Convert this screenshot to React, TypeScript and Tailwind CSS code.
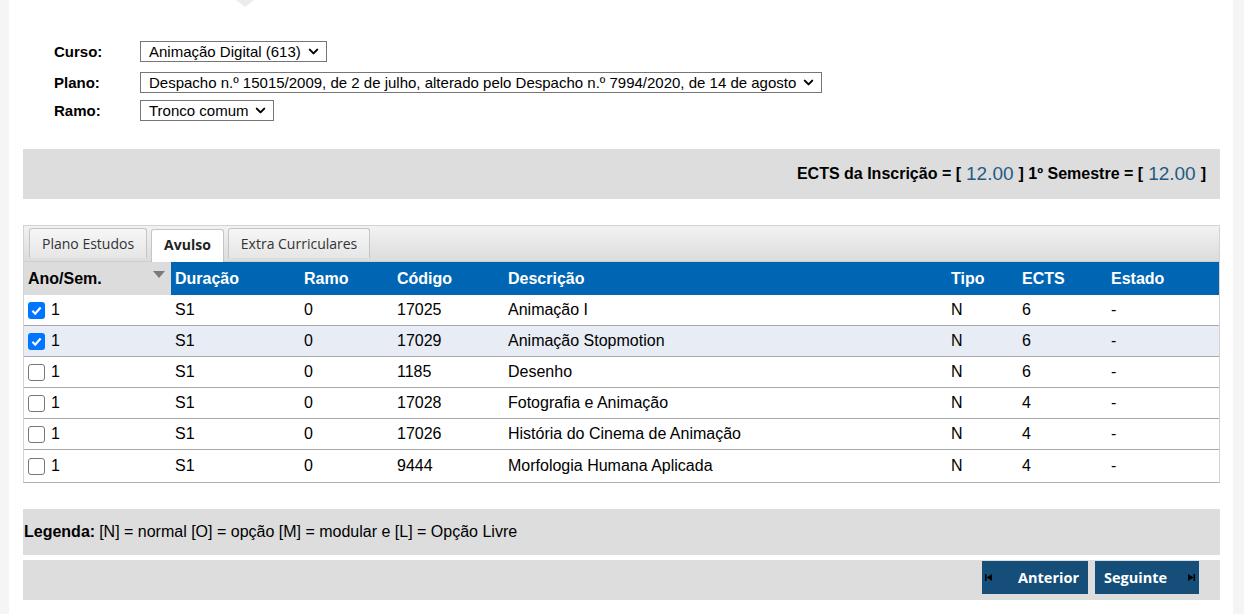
import { ChevronDown } from "lucide-react";

type Row = { checked: boolean; cod: string; desc: string; ects: string };

const rows: Row[] = [
  { checked: true, cod: "17025", desc: "Animação I", ects: "6" },
  { checked: true, cod: "17029", desc: "Animação Stopmotion", ects: "6" },
  { checked: false, cod: "1185", desc: "Desenho", ects: "6" },
  { checked: false, cod: "17028", desc: "Fotografia e Animação", ects: "4" },
  { checked: false, cod: "17026", desc: "História do Cinema de Animação", ects: "4" },
  { checked: false, cod: "9444", desc: "Morfologia Humana Aplicada", ects: "4" },
];

const cols = "grid grid-cols-[147px_129px_93px_111px_443px_71px_89px_112px]";

function FakeSelect({ text }: { text: string }) {
  return (
    <div className="flex items-center h-[21px] border border-[#767676] pl-[8px] pr-[5px] gap-[5px] text-[15px] text-black">
      <span className="leading-none">{text}</span>
      <ChevronDown size={15} strokeWidth={3.2} />
    </div>
  );
}

function Check({ on }: { on: boolean }) {
  return on ? (
    <span className="w-[17px] h-[17px] rounded-[3px] bg-[#0075ff] flex items-center justify-center">
      <svg width="13" height="13" viewBox="0 0 12 12">
        <path d="M2.2 6.3l2.6 2.6 5-5.6" fill="none" stroke="white" strokeWidth="2" />
      </svg>
    </span>
  ) : (
    <span className="w-[17px] h-[17px] rounded-[3px] border border-[#767676] bg-white" />
  );
}

export default function App() {
  return (
    <div className="bg-[#f5f5f5] pl-[9px] pr-[11px] min-h-[614px]" style={{ fontFamily: '"Liberation Sans", Arial, sans-serif' }}>
      <div className="bg-white min-h-[614px] relative px-[14px] pr-[13px]">
        <svg className="absolute left-[227px] top-0" width="18" height="7" viewBox="0 0 18 7">
          <path d="M0 0h18L9 7z" fill="#ececec" />
        </svg>

        <div className="pt-[41px] pl-[31px]">
          <div className="flex items-center h-[21px]">
            <span className="w-[86px] font-bold text-[15px] leading-none">Curso:</span>
            <FakeSelect text="Animação Digital (613)" />
          </div>
          <div className="flex items-center h-[21px] mt-[10px]">
            <span className="w-[86px] font-bold text-[15px] leading-none">Plano:</span>
            <FakeSelect text="Despacho n.º 15015/2009, de 2 de julho, alterado pelo Despacho n.º 7994/2020, de 14 de agosto" />
          </div>
          <div className="flex items-center h-[21px] mt-[7px]">
            <span className="w-[86px] font-bold text-[15px] leading-none">Ramo:</span>
            <FakeSelect text="Tronco comum" />
          </div>
        </div>

        <div className="mt-[28px] h-[50px] bg-[#dddddd] flex items-center justify-end pr-[14px] font-bold text-[16px] text-black gap-[5px]">
          <span>ECTS da Inscrição = [</span>
          <span className="font-normal text-[19px] text-[#1f5b86]">12.00</span>
          <span>] 1º Semestre = [</span>
          <span className="font-normal text-[19px] text-[#1f5b86]">12.00</span>
          <span>]</span>
        </div>

        <div className="mt-[26px] border border-[#d3d3d3] border-b-[#b0b0b0]">
          <div className="h-[36px] bg-gradient-to-b from-[#f2f2f2] to-[#dcdcdc] flex items-end pl-[5px] gap-[4px] border-b border-[#cfcfcf]" style={{ fontFamily: '"Open Sans", sans-serif' }}>
            <div className="h-[30px] px-[12px] flex items-center text-[14px] text-[#333] bg-gradient-to-b from-[#f6f6f6] to-[#e6e6e6] border border-[#c5c5c5] border-b-0 rounded-t-[3px] mb-[3px]">
              Plano Estudos
            </div>
            <div className="h-[33px] px-[12px] pb-[3px] flex items-center text-[14px] font-bold text-[#222] bg-white border border-[#c5c5c5] border-b-0 rounded-t-[3px] -mb-px">
              Avulso
            </div>
            <div className="h-[30px] px-[12px] flex items-center text-[14px] text-[#333] bg-gradient-to-b from-[#f6f6f6] to-[#e6e6e6] border border-[#c5c5c5] border-b-0 rounded-t-[3px] mb-[3px]">
              Extra Curriculares
            </div>
          </div>

          <div className={`${cols} h-[33px] text-[16px] font-bold`}>
            <div className="bg-[#dcdcdc] pl-[4px] flex items-center justify-between pr-[6px]">
              <span>Ano/Sem.</span>
              <svg width="12" height="7" viewBox="0 0 12 7" className="-mt-[8px]">
                <path d="M0 0h12L6 7z" fill="#7a7a7a" />
              </svg>
            </div>
            {["Duração", "Ramo", "Código", "Descrição", "Tipo", "ECTS", "Estado"].map((h) => (
              <div key={h} className="bg-[#0066b3] text-white pl-[4px] flex items-center">
                {h}
              </div>
            ))}
          </div>

          {rows.map((r, i) => (
            <div
              key={r.cod}
              className={`${cols} ${i === rows.length - 1 ? "h-[32px]" : "h-[31px] border-b border-[#a9a9a9]"} text-[16px] text-black ${i === 1 ? "bg-[#e8edf5]" : "bg-white"}`}
            >
              <div className="pl-[4px] flex items-center gap-[6px]">
                <Check on={r.checked} />
                <span>1</span>
              </div>
              <div className="pl-[4px] flex items-center">S1</div>
              <div className="pl-[4px] flex items-center">0</div>
              <div className="pl-[4px] flex items-center">{r.cod}</div>
              <div className="pl-[4px] flex items-center">{r.desc}</div>
              <div className="pl-[4px] flex items-center">N</div>
              <div className="pl-[4px] flex items-center">{r.ects}</div>
              <div className="pl-[4px] flex items-center">-</div>
            </div>
          ))}
        </div>

        <div className="mt-[26px] h-[46px] bg-[#dddddd] flex items-center pl-[1px] text-[16px] text-black">
          <span className="font-bold">Legenda:</span>
          <span className="ml-[4px]">[N] = normal [O] = opção [M] = modular e [L] = Opção Livre</span>
        </div>

        <div className="mt-[5px] h-[40px] bg-[#dddddd] flex justify-end items-start pt-[1px] pr-[21px] gap-[7px]" style={{ fontFamily: '"Open Sans", sans-serif' }}>
          <button className="w-[106px] h-[33px] bg-[#154f79] text-white font-bold text-[14.5px] flex items-center pl-[3px]">
            <svg width="7" height="7" viewBox="0 0 7 7">
              <path d="M0 0h1.5v7H0zM7 0v7L1.5 3.5z" fill="#000" />
            </svg>
            <span className="ml-[26px]">Anterior</span>
          </button>
          <button className="w-[104px] h-[33px] bg-[#154f79] text-white font-bold text-[14.5px] flex items-center pl-[9px] pr-[4px] justify-between">
            <span>Seguinte</span>
            <svg width="7" height="7" viewBox="0 0 7 7">
              <path d="M5.5 0H7v7H5.5zM0 0v7l5.5-3.5z" fill="#000" />
            </svg>
          </button>
        </div>
      </div>
    </div>
  );
}
